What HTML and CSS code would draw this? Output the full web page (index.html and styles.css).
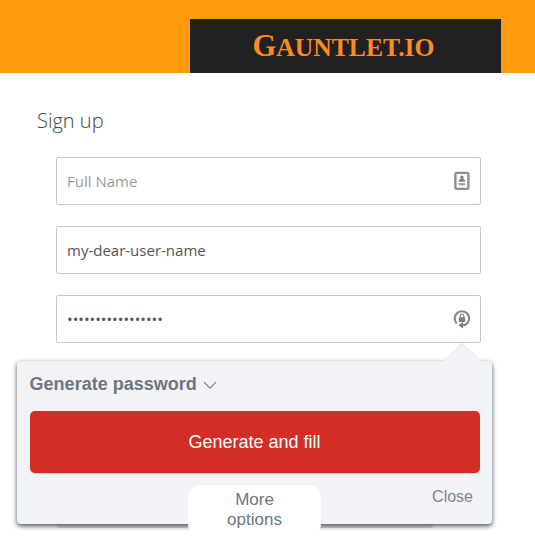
FILE: index.html
```
<!DOCTYPE html>
<html lang="en">
<head>
<meta charset="utf-8">
<title>Gauntlet.io – Sign up</title>
<link rel="stylesheet" href="styles.css">
</head>
<body>
<header class="topbar">
  <div class="brand">
    <svg class="logo" width="311" height="54" viewBox="0 0 311 54" role="img">
      <text class="logo-text" x="62.5" y="36.8" textLength="182" lengthAdjust="spacingAndGlyphs"><tspan class="logo-cap">G</tspan>AUNTLET.IO</text>
    </svg>
  </div>
</header>
<main class="signup">
  <h1 class="title">Sign up</h1>
  <form class="form">
    <div class="field placeholder"><span>Full Name</span>
      <svg class="icon" width="18" height="20" viewBox="0 0 18 20">
        <rect x="2.4" y="1.9" width="13" height="16" rx="1.2" fill="#fff" stroke="#8f8f8f" stroke-width="2.4"/>
        <circle cx="8.9" cy="6.3" r="1.7" fill="#858585"/>
        <path d="M5.8 10.8V9.2l1.8-1.7h2.6L12 9.2v1.6z" fill="#858585"/>
        <path d="M5.6 13.2h6.6" stroke="#a2a2a2" stroke-width="2.2"/>
      </svg>
    </div>
    <div class="field"><span>my-dear-user-name</span></div>
    <div class="field"><span class="dots">•••••••••••••••••</span>
      <svg class="icon" width="18" height="20" viewBox="0 0 18 20">
        <path d="M3.7 14.4A7.2 7.2 0 1 1 14.3 14.2Q12.4 16.4 9 16.4" fill="none" stroke="#8a8a8a" stroke-width="2.2"/>
        <path d="M10 13v6.6l-4.8-3.3z" fill="#7d7d7d"/>
        <rect x="5.8" y="8.2" width="6.4" height="4.8" rx=".5" fill="#7d7d7d"/>
        <path d="M7.2 8.4V6.8a1.8 1.8 0 0 1 3.6 0v1.6" fill="none" stroke="#7d7d7d" stroke-width="1.2"/>
      </svg>
    </div>
  </form>
</main>
<div class="overlay">
  <section class="popup">
    <svg class="arrow" width="36" height="19" viewBox="0 0 36 19">
      <path d="M0 19L1.5 17.5L17 2Q18 1 19 2L34.5 17.5L36 19z" fill="#f2f3f7"/>
      <path d="M.5 17.8L17 2Q18 1 19 2L35.5 17.8" fill="none" stroke="#e4e5e9" stroke-width="1"/>
    </svg>
    <div class="heading"><span>Generate password</span>
      <svg width="14" height="9" viewBox="0 0 14 9"><path d="M1 1.2L7 7.2L13 1.2" fill="none" stroke="#6e7a82" stroke-width="1.1"/></svg>
    </div>
    <div class="generate">Generate and fill</div>
    <div class="actions">
      <div class="more">More<br>options</div>
      <div class="close">Close</div>
    </div>
  </section>
  <div class="behind"></div>
</div>
</body>
</html>
```
FILE: styles.css
```
* { box-sizing: border-box; }
html, body { height: 100%; }
body {
  margin: 0;
  position: relative;
  overflow: hidden;
  background: #fff;
  color: #555;
  font-family: "Open Sans", sans-serif;
}
.topbar {
  height: 73px;
  padding: 19px 34px 0 190px;
  background: #ff990d;
}
.brand { height: 54px; background: #212121; }
.logo { display: block; }
.logo-text {
  font: bold 26px "Liberation Serif", serif;
  fill: #ff8a22;
}
.logo-cap { font-size: 31px; }
.signup { padding: 33px 54px 0 37px; }
.title {
  margin: 0;
  font-size: 20px;
  line-height: 30px;
  font-weight: 300;
  color: #444;
}
.form {
  display: flex;
  flex-direction: column;
  gap: 21px;
  padding: 21px 0 0 19px;
}
.field {
  display: flex;
  align-items: center;
  justify-content: space-between;
  height: 48px;
  padding: 0 9px 0 10px;
  border: 1px solid #c8c8c8;
  border-radius: 2px;
  font-size: 15px;
  line-height: 20px;
}
.placeholder { color: #999; }
.icon { flex: none; }
.overlay {
  position: absolute;
  inset: 330px 0 13px 0;
  overflow: hidden;
  font-family: "Liberation Sans", Arial, sans-serif;
  color: #6b7780;
}
/* Edge of the page's own button, showing through the popup's shadow */
.behind {
  position: absolute;
  z-index: 1;
  left: 56px;
  top: 194px;
  width: 377px;
  height: 4px;
  border-radius: 0 0 3px 3px;
  background: rgba(80, 92, 102, .25);
}
.popup {
  width: 475px;
  height: 163px;
  margin: 31px 0 0 17px;
  padding: 13px 12px 0 13px;
  border-radius: 4px;
  background: #f2f3f7;
  box-shadow: 0 2px 5px #43525d;
}
.arrow { position: absolute; left: 444px; top: 12px; }
.heading {
  display: flex;
  align-items: center;
  gap: 6px;
  height: 20px;
  font-size: 18px;
  font-weight: bold;
}
.heading span { margin-left: -.4px; }
.heading svg { margin-top: 3px; }
.generate {
  height: 62px;
  margin-top: 17px;
  border-radius: 5px;
  background: #d32d27;
  box-shadow: 0 1px 1px #c5c8cc;
  color: #fff;
  font-size: 18px;
  line-height: 62px;
  padding-right: 1px;
  text-align: center;
}
.actions {
  display: flex;
  justify-content: space-between;
  padding: 12px 7px 0 158px;
}
.more {
  position: relative;
  z-index: 2;
  width: 133px;
  height: 52px;
  padding-top: 5px;
  border-radius: 13px;
  background: #fff;
  font-size: 17px;
  line-height: 20px;
  text-align: center;
}
.close { padding-top: 2px; font-size: 16px; line-height: 20px; color: #7b858c; }
```
